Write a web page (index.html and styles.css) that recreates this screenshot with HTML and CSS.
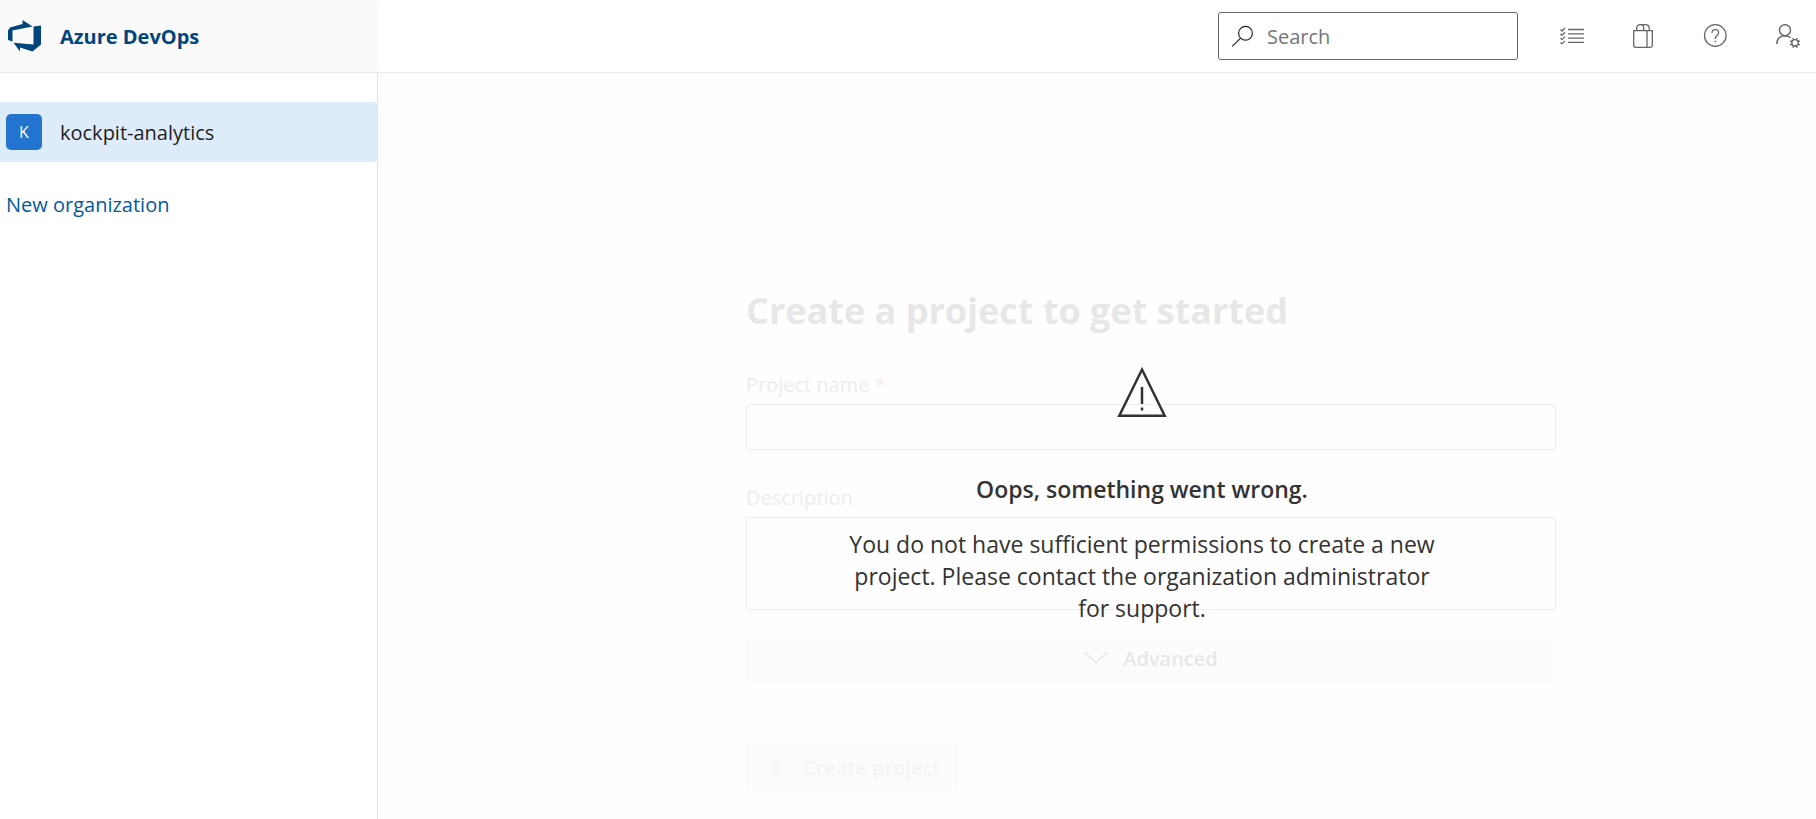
FILE: index.html
```html
<!DOCTYPE html>
<html lang="en">
<head>
<meta charset="utf-8">
<title>Azure DevOps</title>
<link rel="stylesheet" href="styles.css">
</head>
<body>
<header class="topbar">
  <a class="brand" href="#">
    <svg class="brand-logo" viewBox="0 0 36 36" aria-hidden="true"><path fill="#00457c" fill-rule="evenodd" d="M2 12.500 4 9.500 16.500 6V2L26.500 8.500 6.500 12.500V23.500L2 22ZM27.500 8.500 35 7.500V26.500L26.500 33.500 14 29.500V33.500L7.500 24.800 27.500 26.500Z"/></svg>
    <span>Azure DevOps</span>
  </a>
  <div class="tools">
    <label class="search">
      <svg class="search-icon" viewBox="0 0 24 24" fill="none" stroke="#222" stroke-width="1.200" aria-hidden="true"><circle cx="14.500" cy="9.200" r="6.900"/><path d="M9.600 14.100 1.200 22.400"/></svg>
      <input class="search-input" type="text" placeholder="Search" aria-label="Search">
    </label>
    <nav class="actions">
      <button class="action" aria-label="Work items"><svg viewBox="0 0 24 24" fill="none" stroke="#666" stroke-width="1.300"><path d="M8 5.500H24M8 9.800H24M8 14.100H24M8 18.400H24"/><path d="M.5 5.500 2 7 5 4M.5 9.800 2 11.300 5 8.300M.5 14.100 2 15.600 5 12.600M.5 18.400 2 19.900 5 16.900"/></svg></button>
      <button class="action" aria-label="Marketplace"><svg viewBox="0 0 24 24" fill="none" stroke="#666" stroke-width="1.300"><path d="M1.700 6.700H20.300V21.500Q20.300 23.300 18.500 23.300H3.500Q1.700 23.300 1.700 21.500ZM15 6.700V23.300M4.700 6.700V4Q5 .7 8.300.7 11.700.7 11.700 4V6.700M8.500.7H13.500Q17 .7 17.200 4V6.700"/></svg></button>
      <button class="action" aria-label="Help"><svg viewBox="0 0 24 24" fill="none" stroke="#666" stroke-width="1.300"><circle cx="11.300" cy="11.500" r="10.800"/><path d="M8 9Q8 5.700 11.300 5.700 14.600 5.700 14.600 8.700 14.600 10.200 12.900 11.600 11.300 12.900 11.300 14.500V15M11.300 16.800V18.300"/></svg></button>
      <button class="action" aria-label="User settings"><svg viewBox="0 0 24 24" fill="none" stroke="#666" stroke-width="1.400"><circle cx="9" cy="6.200" r="5.500"/><path d="M.7 20Q1 12.200 8.700 11.800 12 11.800 14.500 13.700"/><circle cx="19" cy="18.800" r="3.200"/><path d="M17.700 15.900 16.900 14M20.300 15.900 21.100 14M21.900 17.500 23.900 16.800M21.900 20.100 23.900 20.900M20.300 21.700 21.100 23.700M17.700 21.700 16.900 23.700M16.100 20.100 14.100 20.900M16.100 17.500 14.100 16.800"/></svg></button>
    </nav>
  </div>
</header>
<div class="layout">
  <aside class="sidebar">
    <a class="org" href="#"><span class="avatar">K</span><span>kockpit-analytics</span></a>
    <a class="new-org" href="#">New organization</a>
  </aside>
  <main class="main">
    <form class="project-form">
      <h1 class="form-title">Create a project to get started</h1>
      <label class="field-label" for="name">Project name <span class="required">*</span></label>
      <input class="field" id="name" type="text">
      <label class="field-label" for="description">Description</label>
      <textarea class="field field-area" id="description"></textarea>
      <button class="btn advanced" type="button"><svg class="btn-icon" viewBox="0 0 24 24" fill="none" stroke="currentColor" stroke-width="1.500" aria-hidden="true"><path d="M1 5 12 16 23 5"/></svg>Advanced</button>
      <button class="btn create" type="button" disabled><svg class="btn-icon" viewBox="0 0 24 24" fill="none" stroke="currentColor" stroke-width="1.500" aria-hidden="true"><path d="M12 0V24M0 12H24"/></svg>Create project</button>
    </form>
    <section class="error" role="alert">
      <svg class="error-icon" viewBox="0 0 52 52" fill="none" stroke="#333" stroke-width="2.500" aria-hidden="true"><path d="M26 3.500 48.700 49.700H3.300Z"/><path d="M26 21V38M26 41.500V44.500"/></svg>
      <h2 class="error-title">Oops, something went wrong.</h2>
      <p class="error-text">You do not have sufficient permissions to create a new project. Please contact the organization administrator for support.</p>
    </section>
  </main>
</div>
</body>
</html>
```
FILE: styles.css
```css
* { box-sizing: border-box; }
body {
  margin: 0;
  min-height: 100vh;
  display: flex;
  flex-direction: column;
  font-family: "Open Sans", "Noto Sans", sans-serif;
  font-size: 20px;
  line-height: 28px;
  color: #1e1e1e;
  background: #fff;
}
a { text-decoration: none; }
button, input, textarea { font: inherit; color: inherit; }

.topbar { display: flex; border-bottom: 1px solid #eaeaea; }
.brand {
  width: 378px;
  height: 72px;
  display: flex;
  align-items: center;
  gap: 18px;
  padding-left: 6px;
  background: #fafafa;
  border-radius: 0 4px 4px 0;
  color: #00457c;
  font-weight: 700;
}
.brand span, .org span + span { padding-top: 2px; }
.brand-logo { width: 36px; height: 36px; }
.tools {
  flex: 1;
  display: flex;
  justify-content: flex-end;
  align-items: center;
  gap: 42px;
  padding-right: 16px;
}
.search {
  width: 300px;
  height: 48px;
  display: flex;
  align-items: center;
  gap: 12px;
  padding: 0 12px;
  border: 1px solid #666;
  border-radius: 3px;
}
.search-icon { width: 24px; height: 24px; flex: none; }
.search-input { flex: 1; min-width: 0; border: 0; padding: 2px 0 0; outline: 0; background: none; }
.search-input::placeholder { color: #767676; opacity: 1; }
.actions { display: flex; gap: 48px; }
.action { width: 24px; height: 24px; padding: 0; border: 0; background: none; }
.action svg { display: block; width: 24px; height: 24px; overflow: visible; }

.layout { flex: 1; display: flex; }
.sidebar { width: 378px; padding-top: 29px; border-right: 1px solid #e2e2e2; }
.org {
  height: 60px;
  display: flex;
  align-items: center;
  gap: 18px;
  padding-left: 6px;
  border-radius: 0 3px 3px 0;
  background: #deecf9;
  color: #1e1e1e;
}
.avatar {
  width: 36px;
  height: 36px;
  border-radius: 5px;
  background: #2374cf;
  color: #fff;
  font-size: 16px;
  line-height: 36px;
  text-align: center;
}
.new-org { display: inline-block; margin: 29px 6px; color: #005a9e; }

.main { flex: 1; position: relative; padding: 210px 0 20px 108px; background: #fefefe; }
.project-form { width: 100%; max-width: 810px; margin: 0 auto; display: flex; flex-direction: column; }
.form-title { margin: 0 0 32px; font-size: 36px; line-height: 56px; font-weight: 700; color: #e7e7e7; }
.field-label { margin-bottom: 5px; color: #ededed; }
.required { color: #f8eaeb; }
.field {
  width: 100%;
  height: 46px;
  margin-bottom: 34px;
  border: 1px solid #ececec;
  border-radius: 3px;
  background: transparent;
  outline: 0;
}
.field-area { height: 93px; margin-bottom: 24px; resize: none; }
.btn {
  height: 49px;
  display: flex;
  justify-content: center;
  align-items: center;
  gap: 15px;
  padding: 0 18px;
  border: 0;
  border-radius: 3px;
  background: #fcfcfc;
  color: #e7e7e7;
  font-weight: 600;
}
.btn-icon { width: 24px; height: 24px; }
.create { align-self: flex-start; margin-top: 60px; color: #f4f4f4; }

.error {
  position: absolute;
  inset: 0 0 auto 90px;
  display: flex;
  flex-direction: column;
  align-items: center;
  padding-top: 293px;
  color: #333;
  text-align: center;
}
.error-icon { width: 52px; height: 52px; }
.error-title { margin: 55px 0 23px; font-size: 23px; line-height: 32px; font-weight: 600; }
.error-text { max-width: 600px; margin: 0; font-size: 23px; line-height: 32px; }
```
